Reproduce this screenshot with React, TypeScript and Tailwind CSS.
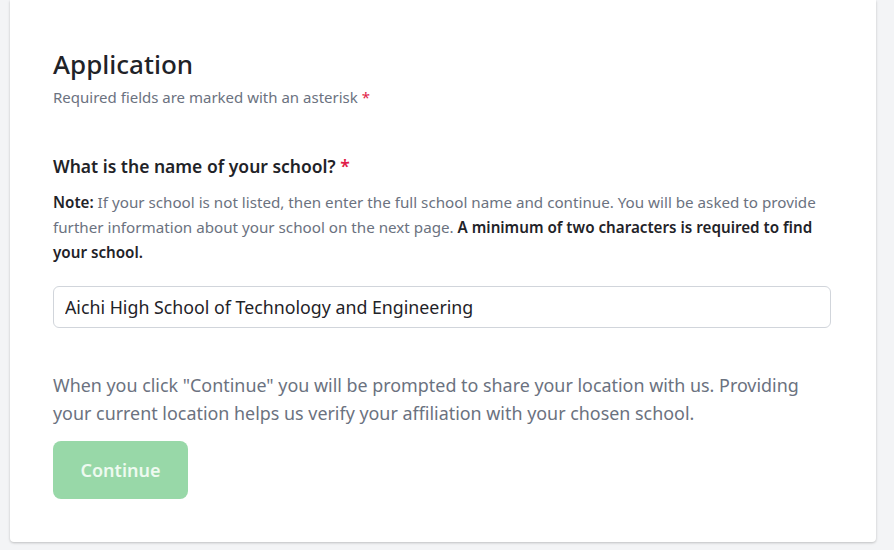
export default function App() {
  return (
    <div className="min-h-[550px] bg-[#f3f4f6] pl-[10px] font-['Noto_Sans',sans-serif]">
      <div className="w-[866px] rounded-b-[4px] bg-white px-[43px] pt-[46px] pb-[43px] shadow-[0_1px_3px_rgba(0,0,0,0.15),0_1px_2px_rgba(0,0,0,0.08)]">
        {/* Header */}
        <h1 className="text-[26px] font-medium leading-[36px] text-[#1f2328]">Application</h1>
        <p className="mt-[5px] text-[15px] leading-[20px] text-[#6b7280]">
          Required fields are marked with an asterisk <span className="text-[#e11d48]">*</span>
        </p>

        {/* School question */}
        <h2 className="mt-[47px] text-[17.5px] font-semibold leading-[24px] text-[#1f2328]">
          What is the name of your school? <span className="text-[#e11d48]">*</span>
        </h2>
        <p className="mt-[12px] text-[15.2px] leading-[25px] text-[#6b7280]">
          <span className="font-semibold text-[#1f2328]">Note:</span> If your school is not listed, then enter the
          full school name and continue. You will be asked to provide further information about your school on the
          next page.{" "}
          <span className="font-semibold text-[#1f2328]">
            A minimum of two characters is required to find your school.
          </span>
        </p>

        <input
          readOnly
          value="Aichi High School of Technology and Engineering"
          className="mt-[21px] block h-[42px] w-[778px] rounded-[6px] border border-[#d1d5db] px-[11px] text-[17.8px] text-[#1f2328] outline-none"
        />

        {/* Location notice */}
        <p className="mt-[43px] text-[17.9px] leading-[28px] text-[#6b7280]">
          When you click "Continue" you will be prompted to share your location with us. Providing your current
          location helps us verify your affiliation with your chosen school.
        </p>

        <button className="mt-[14px] h-[58px] w-[135px] rounded-[8px] bg-[#98d8a8] text-[18px] font-semibold text-[#eefaf0]">
          Continue
        </button>
      </div>
    </div>
  );
}
